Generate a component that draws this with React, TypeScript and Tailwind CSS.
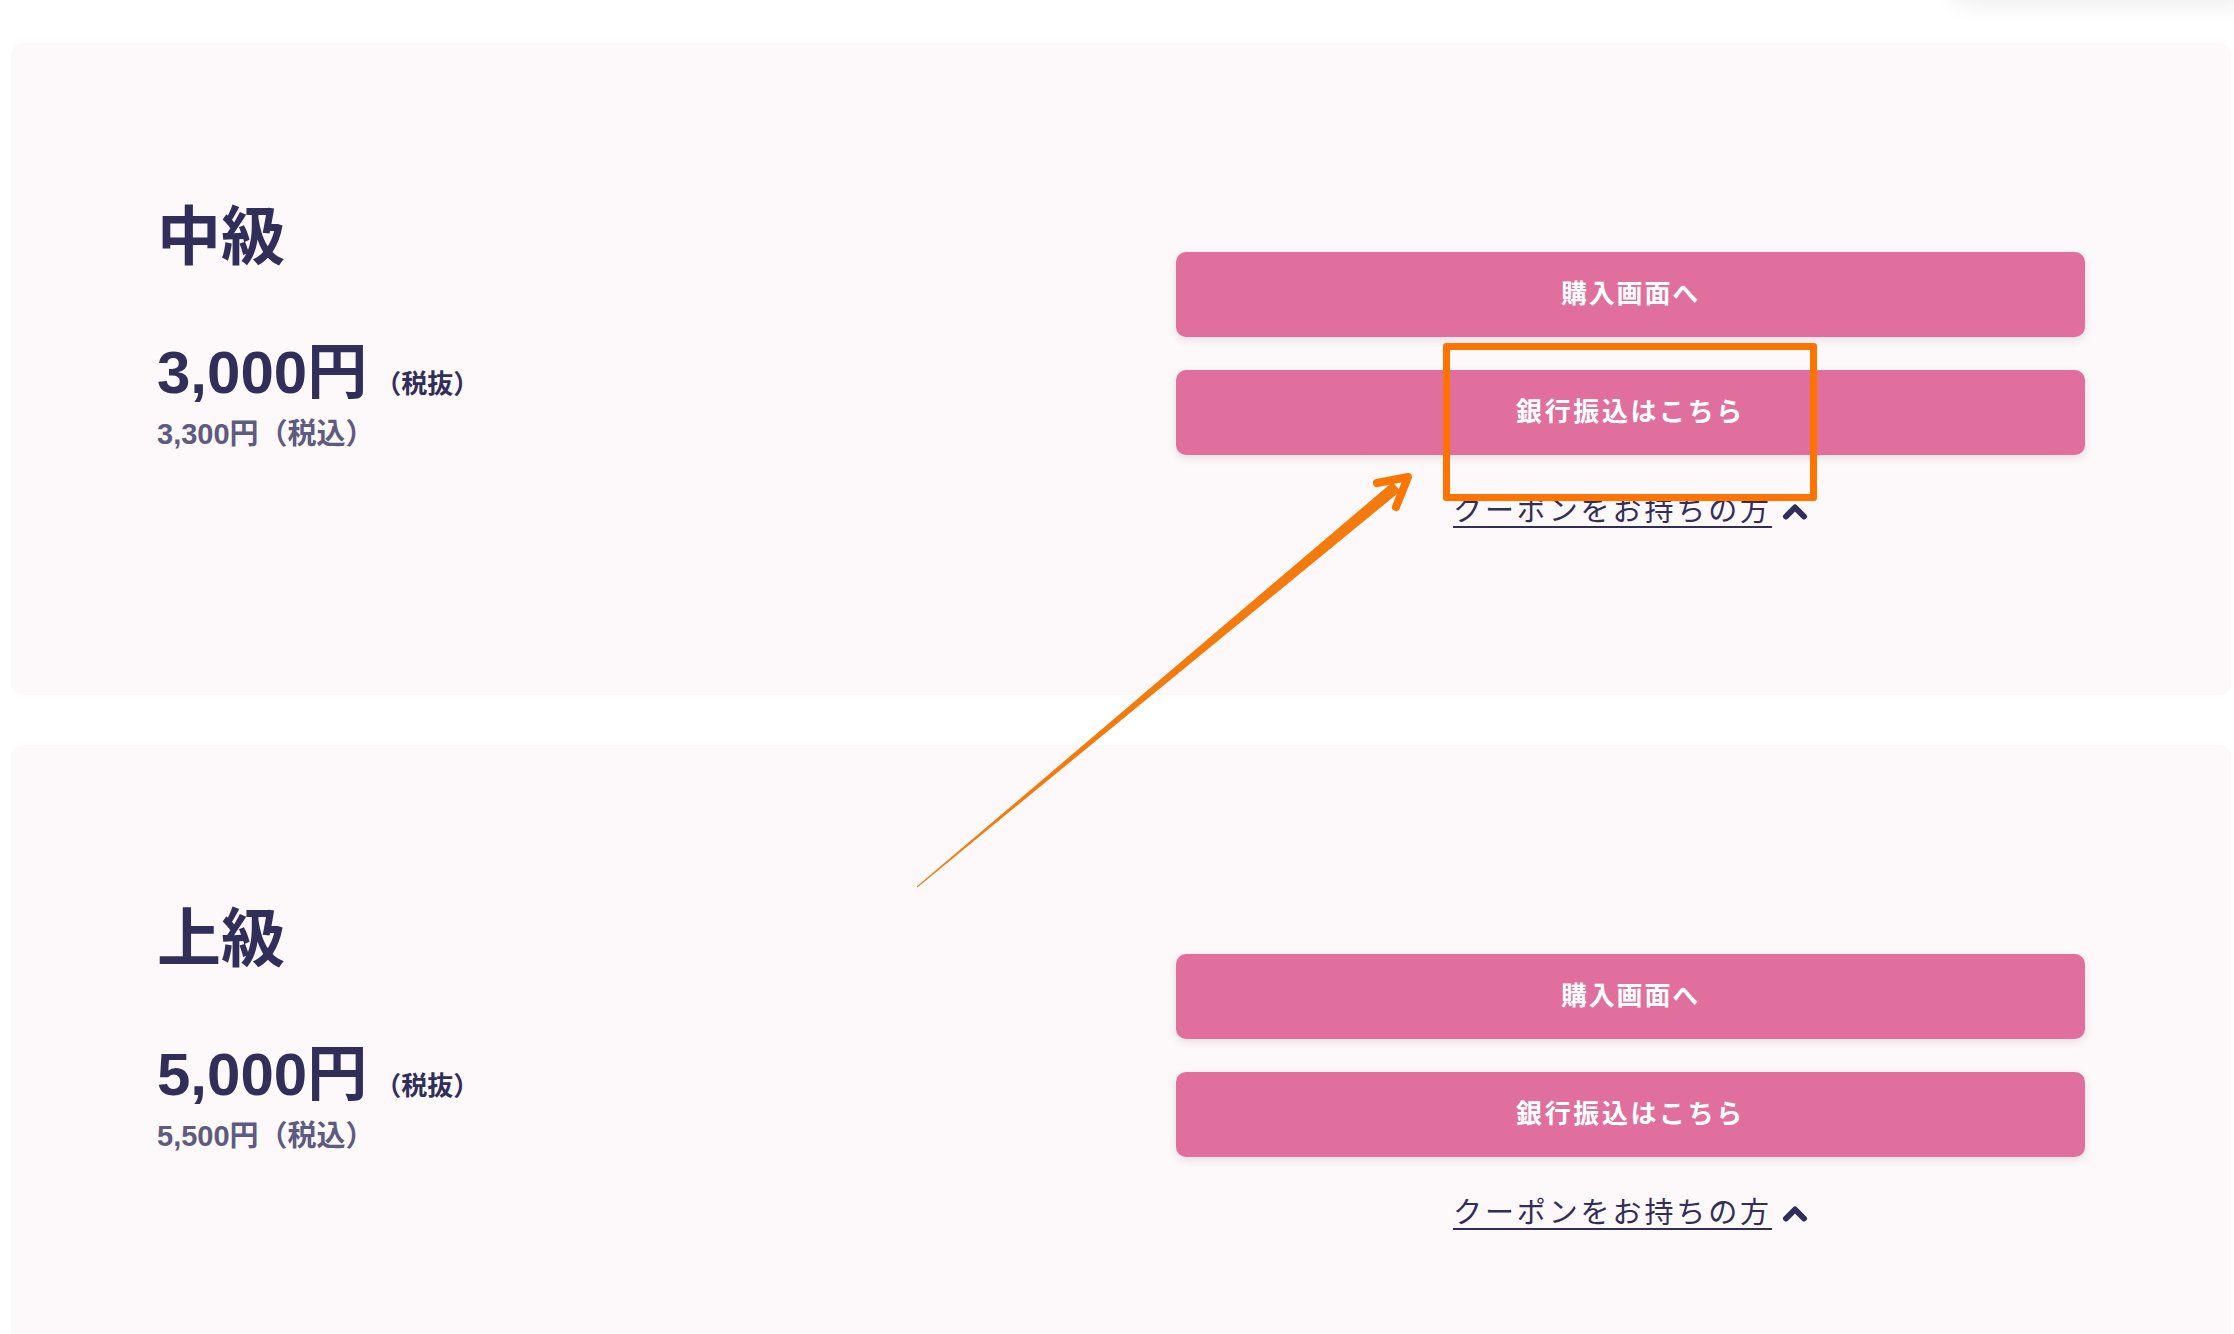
interface Plan {
  id: string;
  name: string;
  price: string;
  priceWithTax: string;
}

const plans: Plan[] = [
  { id: 'middle', name: '中級', price: '3,000', priceWithTax: '3,300' },
  { id: 'advanced', name: '上級', price: '5,000', priceWithTax: '5,500' },
];

function ChevronUp() {
  return (
    <svg width="26" height="20" viewBox="0 0 26 20" className="text-[#312f5a]">
      <path
        d="M4 15.5 L13 6.5 L22 15.5"
        fill="none"
        stroke="currentColor"
        strokeWidth="6"
        strokeLinecap="round"
        strokeLinejoin="round"
      />
    </svg>
  );
}

function PlanCard({ plan }: { plan: Plan }) {
  return (
    <div className="h-[652px] w-[2220px] ml-[11px] rounded-xl bg-[#fdf8f9] px-[146px] flex justify-between items-start">
      {/* Left: name and price */}
      <div className="mt-[162px] text-[#312f5a]">
        <h2 className="text-[64px] leading-[64px] font-bold">{plan.name}</h2>
        <div className="mt-[74px] flex items-baseline leading-[60px] font-bold">
          <span className="text-[60px]">{plan.price}円</span>
          <span className="text-[26px] ml-[8px]">（税抜）</span>
        </div>
        <div className="mt-[6px] text-[29px] leading-[29px] font-bold text-[#5d5b80]">
          {plan.priceWithTax}円（税込）
        </div>
      </div>

      {/* Right: actions */}
      <div className="mt-[209px] w-[909px] flex flex-col">
        <button className="h-[85px] rounded-[10px] bg-[#e16f9d] text-white font-bold text-[26px] tracking-[0.07em] shadow-[0_3px_8px_rgba(60,40,80,0.12)]">
          購入画面へ
        </button>
        <button className="mt-[33px] h-[85px] rounded-[10px] bg-[#e16f9d] text-white font-bold text-[26px] tracking-[0.1em] shadow-[0_3px_8px_rgba(60,40,80,0.12)]">
          銀行振込はこちら
        </button>
        <div className="mt-[36px] flex items-center justify-center gap-[10px] text-[#312f5a]">
          <span className="text-[29px] leading-[40px] tracking-[0.1em] underline decoration-2 underline-offset-[5px]">
            クーポンをお持ちの方
          </span>
          <ChevronUp />
        </div>
      </div>
    </div>
  );
}

export default function App() {
  return (
    <div
      className="relative w-full h-[1334px] overflow-hidden bg-white pt-[43px]"
      style={{ fontFamily: '"Liberation Sans", "Noto Sans CJK JP", sans-serif' }}
    >
      {/* shadow of a header sitting above the viewport */}
      <div className="absolute right-[-20px] top-[-70px] w-[300px] h-[70px] rounded-2xl bg-white shadow-[0_0_28px_rgba(0,0,0,0.10)]" />

      <div className="flex flex-col gap-[50px]">
        {plans.map(plan => (
          <PlanCard key={plan.id} plan={plan} />
        ))}
      </div>

      {/* annotation: highlight box */}
      <div className="absolute left-[1443px] top-[343px] w-[374px] h-[158px] border-[7px] border-[#ff7300] rounded-[3px]" />

      {/* annotation: arrow */}
      <svg className="absolute left-0 top-0 pointer-events-none" width="2234" height="1334" viewBox="0 0 2234 1334">
        <defs>
          <linearGradient id="arrowFill" x1="0" y1="0" x2="1" y2="1">
            <stop offset="0" stopColor="#ff8a1a" />
            <stop offset="1" stopColor="#e86a00" />
          </linearGradient>
        </defs>
        <polygon
          points="917.3,887.4 916.7,886.6 1392.6,482.0 1400.4,491.2"
          fill="url(#arrowFill)"
        />
        <path
          d="M1377 483 L1408 477 L1396 507"
          fill="none"
          stroke="#fb7600"
          strokeWidth="8"
          strokeLinecap="round"
          strokeLinejoin="round"
        />
      </svg>
    </div>
  );
}
